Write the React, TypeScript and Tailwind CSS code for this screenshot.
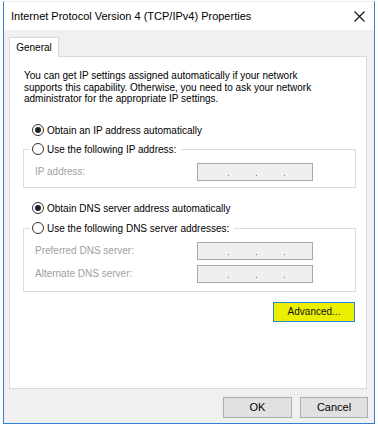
import React from "react";

const font = { fontFamily: '"Liberation Sans", Arial, sans-serif' };

function Radio({ checked, label }: { checked?: boolean; label: string }) {
  return (
    <div className="flex items-center h-[13px] leading-[13px] text-[10px] text-[#000]">
      <span className="w-[12px] h-[12px] rounded-full border border-[#333333] bg-white flex items-center justify-center">
        {checked && <span className="w-[6px] h-[6px] rounded-full bg-[#222222]" />}
      </span>
      <span className="ml-[3px]">{label}</span>
    </div>
  );
}

function IpBox() {
  return (
    <div className="w-[116px] h-[18px] border border-[#a9a9a9] bg-[#efefef] relative">
      <div className="absolute left-[30px] top-[11px] w-[1px] h-[1px] bg-[#777]" />
      <div className="absolute left-[58px] top-[11px] w-[1px] h-[1px] bg-[#777]" />
      <div className="absolute left-[86px] top-[11px] w-[1px] h-[1px] bg-[#777]" />
    </div>
  );
}

function Row({ label, mt }: { label: string; mt?: string }) {
  return (
    <div className={`flex items-center ${mt ?? ""}`}>
      <span className="w-[162px] ml-[5px] text-[10px] text-[#a0a0a0]">{label}</span>
      <IpBox />
    </div>
  );
}

export default function App() {
  return (
    <div className="w-[378px] h-[427px] bg-white pt-[1px] pl-[3px]" style={font}>
      <div className="w-[372px] h-[423px] border border-[#2c82d6] border-t-[#e8eef5] flex flex-col bg-[#f0f0f0]">
        <div className="h-[28px] bg-white flex items-center pl-[7px] pr-[9px] justify-between">
          <span className="text-[11px] text-black mt-[1px]">Internet Protocol Version 4 (TCP/IPv4) Properties</span>
          <svg width="11" height="11" viewBox="0 0 11 11" className="mt-[1px]">
            <path d="M0.5 0.5 L10.5 10.5 M10.5 0.5 L0.5 10.5" stroke="#111" strokeWidth="1.1" />
          </svg>
        </div>
        <div className="pl-[5px] pr-[6px] pt-[7px]">
          <div className="flex">
            <div className="w-[50px] h-[20px] border border-b-0 border-[#d9d9d9] bg-white relative z-10 mb-[-1px] text-[10px] flex items-center justify-center text-black">
              General
            </div>
          </div>
          <div className="w-[358px] h-[333px] border border-[#d9d9d9] bg-white flex flex-col">
            <p className="ml-[14px] mt-[13px] text-[10px] leading-[11.5px] text-black w-[300px]">
              You can get IP settings assigned automatically if your network supports this capability. Otherwise, you need to ask your network administrator for the appropriate IP settings.
            </p>
            <div className="ml-[22px] mt-[19px]">
              <Radio checked label="Obtain an IP address automatically" />
            </div>
            <fieldset className="ml-[13px] mt-[6px] w-[333px] border border-[#dcdcdc] pl-[6px] pb-[6px]">
              <legend className="pl-[2px] pr-[5px]">
                <Radio label="Use the following IP address:" />
              </legend>
              <div className="mt-[7px]">
                <Row label="IP address:" />
              </div>
            </fieldset>
            <div className="ml-[22px] mt-[14px]">
              <Radio checked label="Obtain DNS server address automatically" />
            </div>
            <fieldset className="ml-[13px] mt-[7px] w-[333px] border border-[#dcdcdc] pl-[6px] pb-[8px]">
              <legend className="pl-[2px] pr-[5px]">
                <Radio label="Use the following DNS server addresses:" />
              </legend>
              <div className="mt-[7px]">
                <Row label="Preferred DNS server:" />
                <Row label="Alternate DNS server:" mt="mt-[5px]" />
              </div>
            </fieldset>
            <div className="flex justify-end mr-[11px] mt-[10px]">
              <div className="w-[82px] h-[20px] bg-[#e9ef00] border border-[#2d7fd2] text-[10px] text-[#111] flex items-center justify-center">
                Advanced...
              </div>
            </div>
          </div>
          <div className="flex justify-end gap-[8px] mt-[8px]">
            <div className="w-[69px] h-[21px] bg-[#e1e1e1] border border-[#adadad] text-[11px] text-black flex items-center justify-center">OK</div>
            <div className="w-[68px] h-[21px] bg-[#e1e1e1] border border-[#adadad] text-[11px] text-black flex items-center justify-center">Cancel</div>
          </div>
        </div>
      </div>
    </div>
  );
}
